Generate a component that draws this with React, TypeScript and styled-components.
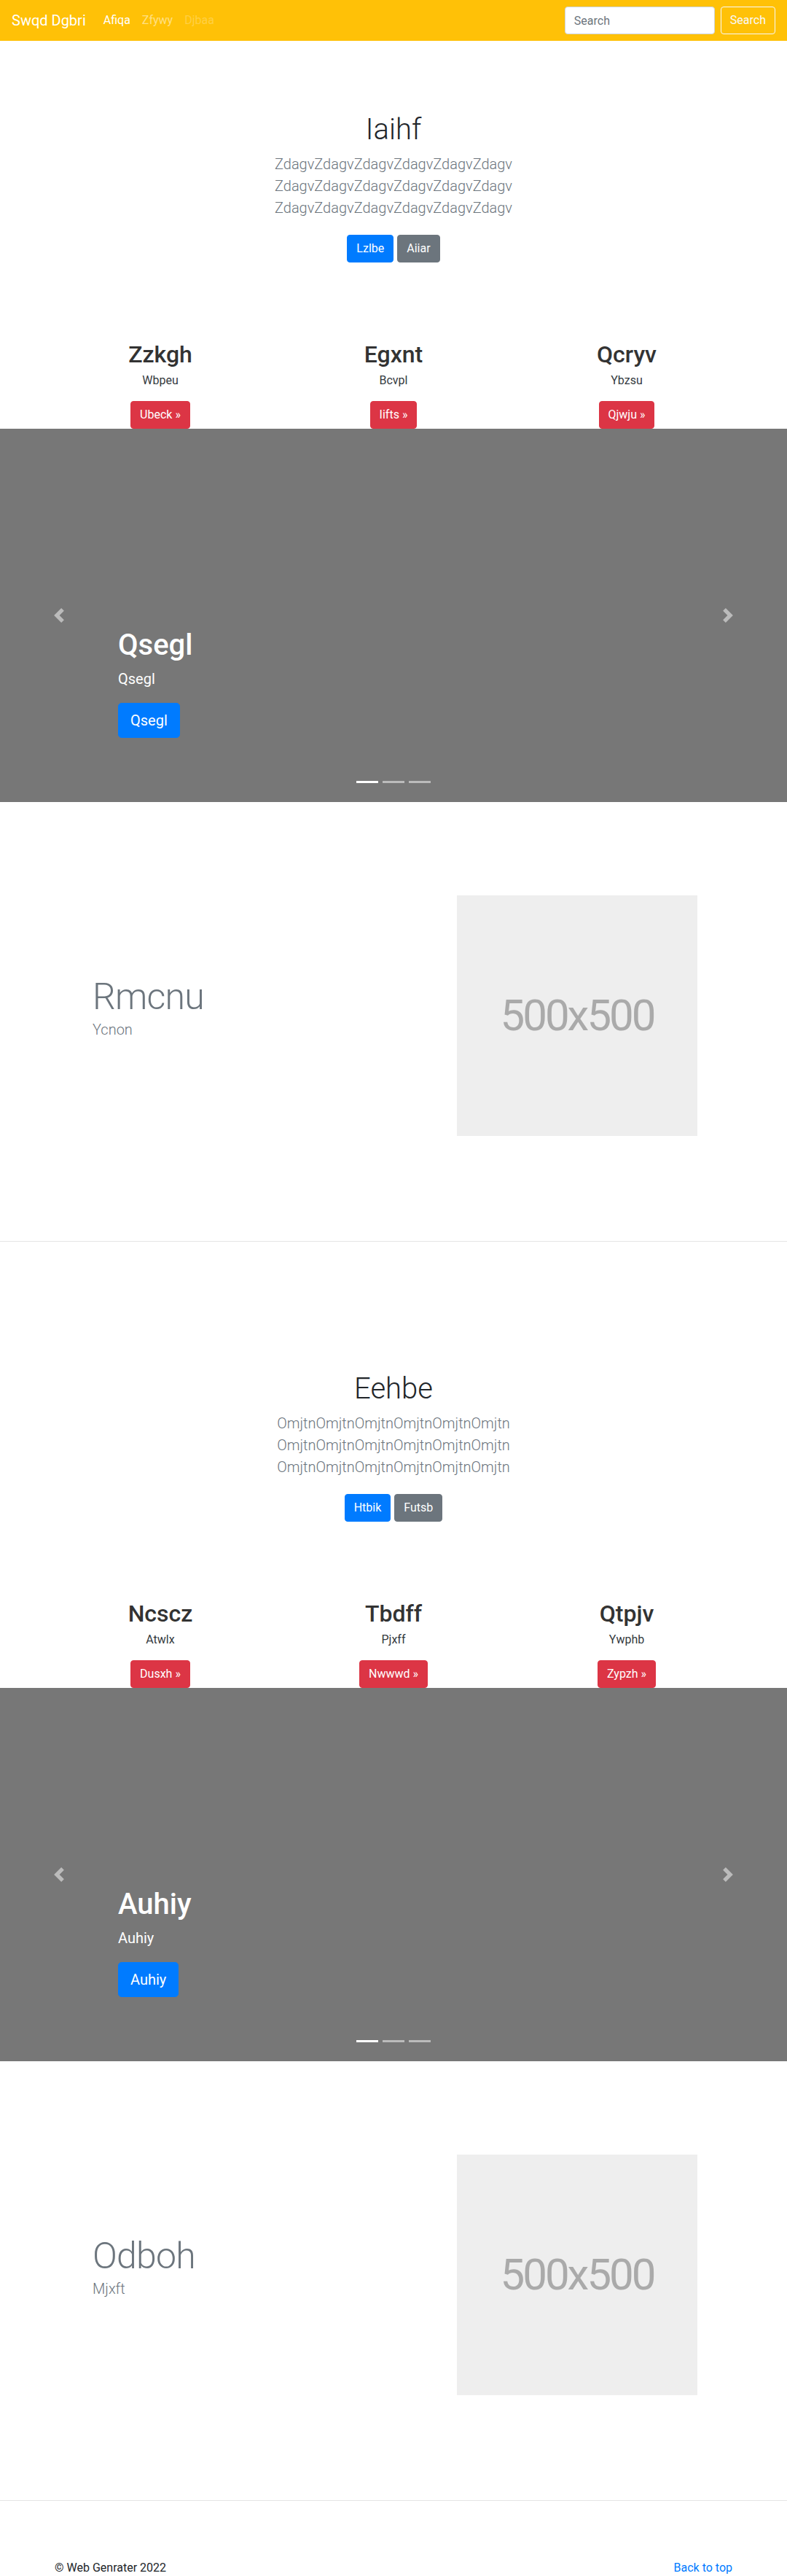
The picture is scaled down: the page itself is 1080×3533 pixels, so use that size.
import React from "react";
import styled, { createGlobalStyle } from "styled-components";

const GlobalStyle = createGlobalStyle`
  *, *::before, *::after { box-sizing: border-box; }
  html, body { margin: 0; padding: 0; }
  body {
    font-family: "Segoe UI", Roboto, "Noto Sans", "Liberation Sans", sans-serif;
    font-size: 16px;
    line-height: 1.5;
    color: #212529;
    background: #fff;
  }
`;

const Navbar = styled.nav`
  display: flex;
  align-items: center;
  height: 56px;
  padding: 0 16px;
  background: #ffc107;
`;

const Brand = styled.a`
  font-size: 20px;
  line-height: 30px;
  color: #fff;
  margin-right: 16px;
  white-space: nowrap;
  text-decoration: none;
`;

const NavList = styled.ul`
  display: flex;
  flex: 1;
  list-style: none;
  margin: 0;
  padding: 0;
`;

type LinkState = "active" | "normal" | "disabled";

const NavLink = styled.a<{ $state: LinkState }>`
  display: block;
  padding: 8px;
  text-decoration: none;
  color: ${(p) =>
    p.$state === "active"
      ? "#fff"
      : p.$state === "normal"
      ? "rgba(255,255,255,0.5)"
      : "rgba(255,255,255,0.25)"};
`;

const SearchForm = styled.form`
  display: flex;
  align-items: center;
`;

const SearchInput = styled.input`
  width: 206px;
  height: 38px;
  padding: 6px 12px;
  margin-right: 8px;
  font-family: inherit;
  font-size: 16px;
  line-height: 1.5;
  color: #495057;
  background: #fff;
  border: 1px solid #ced4da;
  border-radius: 4px;
  &::placeholder { color: #6c757d; }
`;

const OutlineButton = styled.button`
  height: 38px;
  padding: 6px 12px;
  font-family: inherit;
  font-size: 16px;
  line-height: 1.5;
  color: #f8f9fa;
  background: transparent;
  border: 1px solid #f8f9fa;
  border-radius: 4px;
`;

type Variant = "primary" | "secondary" | "danger";
const colors: Record<Variant, string> = {
  primary: "#007bff",
  secondary: "#6c757d",
  danger: "#dc3545",
};

const Btn = styled.a<{ $variant: Variant; $lg?: boolean }>`
  display: inline-block;
  padding: ${(p) => (p.$lg ? "8px 16px" : "6px 12px")};
  font-size: ${(p) => (p.$lg ? "20px" : "16px")};
  line-height: ${(p) => (p.$lg ? "30px" : "24px")};
  border-radius: ${(p) => (p.$lg ? "4.8px" : "4px")};
  border: 1px solid ${(p) => colors[p.$variant]};
  color: #fff;
  background: ${(p) => colors[p.$variant]};
  text-decoration: none;
  white-space: nowrap;
`;

const Hero = styled.section`
  padding-top: 98px;
  text-align: center;
`;

const HeroTitle = styled.h1`
  margin: 0 0 8px;
  font-size: 40px;
  font-weight: 300;
  line-height: 48px;
`;

const Lead = styled.p`
  max-width: 420px;
  margin: 0 auto 14px;
  font-size: 20px;
  font-weight: 300;
  line-height: 30px;
  color: #6c757d;
`;

const ButtonRow = styled.div`
  display: flex;
  justify-content: center;
  gap: 5px;
  padding: 8px 0;
`;

const Marketing = styled.div`
  display: grid;
  grid-template-columns: repeat(3, 320px);
  justify-content: center;
  padding-top: 99px;
  text-align: center;
`;

const Col = styled.div`
  display: flex;
  flex-direction: column;
  align-items: center;
`;

const ColTitle = styled.h2`
  margin: 0 0 5px;
  font-size: 32px;
  font-weight: 500;
  line-height: 38.4px;
  color: #333;
`;

const ColText = styled.p`
  margin: 0 0 15.5px;
  color: #343a40;
`;

const Carousel = styled.div`
  position: relative;
  height: 512px;
  background: #777;
  display: flex;
  flex-direction: column;
  justify-content: flex-end;
  align-items: flex-start;
  padding: 0 15% 88px;
  color: #fff;
`;

const CaptionTitle = styled.h1`
  margin: 0 0 7px;
  font-size: 40px;
  font-weight: 500;
  line-height: 48px;
`;

const CaptionText = styled.p`
  margin: 0 0 18px;
  font-size: 20px;
  line-height: 30px;
`;

const Control = styled.span<{ $side: "left" | "right" }>`
  position: absolute;
  top: 0;
  bottom: 0;
  ${(p) => p.$side}: 0;
  width: 15%;
  display: flex;
  align-items: center;
  justify-content: center;
  opacity: 0.5;
`;

const Indicators = styled.ol`
  position: absolute;
  left: 0;
  right: 0;
  bottom: 26px;
  display: flex;
  justify-content: center;
  gap: 6px;
  margin: 0;
  padding: 0;
  list-style: none;
`;

const Indicator = styled.li<{ $active?: boolean }>`
  width: 30px;
  height: 3px;
  background: ${(p) => (p.$active ? "#fff" : "rgba(255,255,255,0.5)")};
`;

const Featurette = styled.div`
  display: grid;
  grid-template-columns: 500px 330px;
  align-items: center;
  padding: 128px 0 64px 127px;
`;

const FeatTitle = styled.h2`
  margin: 0 0 5px;
  font-size: 50px;
  font-weight: 300;
  line-height: 1;
  letter-spacing: -0.8px;
  color: #6c757d;
`;

const FeatLead = styled.p`
  margin: 0 0 16px;
  font-size: 20px;
  font-weight: 300;
  line-height: 30px;
  color: #6c757d;
`;

const Placeholder = styled.div`
  width: 330px;
  height: 330px;
  display: flex;
  align-items: center;
  justify-content: center;
  background: #eee;
  color: #aaa;
  font-size: 60px;
  letter-spacing: -3px;
`;

const Divider = styled.hr`
  margin: 80px 0;
  border: 0;
  border-top: 1px solid rgba(0, 0, 0, 0.1);
  height: 0;
`;

const Footer = styled.footer`
  width: 960px;
  margin: 0 auto;
  padding: 0 15px;
  display: flex;
  justify-content: space-between;
`;

const FooterText = styled.p`
  margin: 0 0 16px;
`;

const FooterLink = styled.a`
  color: #007bff;
  text-decoration: none;
`;

const PrevIcon = () => (
  <svg width="20" height="20" viewBox="0 0 8 8" fill="#fff">
    <path d="M5.25 0l-4 4 4 4 1.5-1.5L4.25 4l2.5-2.5L5.25 0z" />
  </svg>
);

const NextIcon = () => (
  <svg width="20" height="20" viewBox="0 0 8 8" fill="#fff">
    <path d="M2.75 0l-1.5 1.5L3.75 4l-2.5 2.5L2.75 8l4-4-4-4z" />
  </svg>
);

type BlockData = {
  title: string;
  word: string;
  primary: string;
  secondary: string;
  cols: { h: string; p: string; b: string }[];
  slide: string;
  feat: string;
  featSub: string;
};

const blocks: BlockData[] = [
  {
    title: "Iaihf",
    word: "Zdagv",
    primary: "Lzlbe",
    secondary: "Aiiar",
    cols: [
      { h: "Zzkgh", p: "Wbpeu", b: "Ubeck" },
      { h: "Egxnt", p: "Bcvpl", b: "Iifts" },
      { h: "Qcryv", p: "Ybzsu", b: "Qjwju" },
    ],
    slide: "Qsegl",
    feat: "Rmcnu",
    featSub: "Ycnon",
  },
  {
    title: "Eehbe",
    word: "Omjtn",
    primary: "Htbik",
    secondary: "Futsb",
    cols: [
      { h: "Ncscz", p: "Atwlx", b: "Dusxh" },
      { h: "Tbdff", p: "Pjxff", b: "Nwwwd" },
      { h: "Qtpjv", p: "Ywphb", b: "Zypzh" },
    ],
    slide: "Auhiy",
    feat: "Odboh",
    featSub: "Mjxft",
  },
];

const Block = ({ d }: { d: BlockData }) => {
  const line = d.word.repeat(6);
  return (
    <>
      <Hero>
        <HeroTitle>{d.title}</HeroTitle>
        <Lead>{`${line} ${line} ${line}`}</Lead>
        <ButtonRow>
          <Btn $variant="primary">{d.primary}</Btn>
          <Btn $variant="secondary">{d.secondary}</Btn>
        </ButtonRow>
      </Hero>
      <Marketing>
        {d.cols.map((c) => (
          <Col key={c.h}>
            <ColTitle>{c.h}</ColTitle>
            <ColText>{c.p}</ColText>
            <Btn $variant="danger">{c.b} »</Btn>
          </Col>
        ))}
      </Marketing>
      <Carousel>
        <CaptionTitle>{d.slide}</CaptionTitle>
        <CaptionText>{d.slide}</CaptionText>
        <Btn $variant="primary" $lg>
          {d.slide}
        </Btn>
        <Control $side="left">
          <PrevIcon />
        </Control>
        <Control $side="right">
          <NextIcon />
        </Control>
        <Indicators>
          <Indicator $active />
          <Indicator />
          <Indicator />
        </Indicators>
      </Carousel>
      <Featurette>
        <div>
          <FeatTitle>{d.feat}</FeatTitle>
          <FeatLead>{d.featSub}</FeatLead>
        </div>
        <Placeholder>500x500</Placeholder>
      </Featurette>
      <Divider />
    </>
  );
};

export default function App() {
  return (
    <>
      <GlobalStyle />
      <Navbar>
        <Brand href="#">Swqd Dgbri</Brand>
        <NavList>
          <li>
            <NavLink $state="active" href="#">Afiqa</NavLink>
          </li>
          <li>
            <NavLink $state="normal" href="#">Zfywy</NavLink>
          </li>
          <li>
            <NavLink $state="disabled" href="#">Djbaa</NavLink>
          </li>
        </NavList>
        <SearchForm onSubmit={(e) => e.preventDefault()}>
          <SearchInput type="text" placeholder="Search" />
          <OutlineButton type="submit">Search</OutlineButton>
        </SearchForm>
      </Navbar>
      <main>
        {blocks.map((b) => (
          <Block key={b.title} d={b} />
        ))}
      </main>
      <Footer>
        <FooterText>© Web Genrater 2022</FooterText>
        <FooterText>
          <FooterLink href="#">Back to top</FooterLink>
        </FooterText>
      </Footer>
    </>
  );
}
